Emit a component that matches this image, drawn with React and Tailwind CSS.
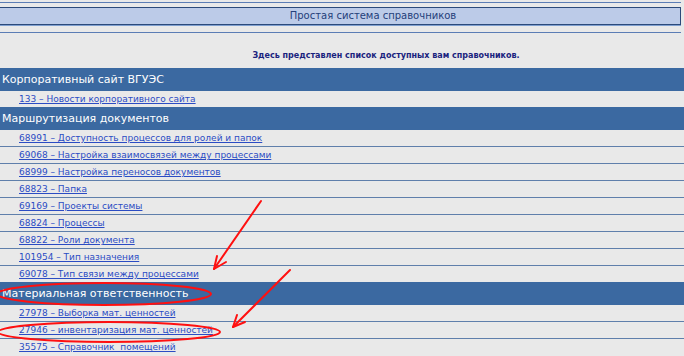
import React from "react";

const sections = [
  {
    title: "Корпоративный сайт ВГУЭС",
    items: ["133 – Новости корпоративного сайта"],
  },
  {
    title: "Маршрутизация документов",
    items: [
      "68991 – Доступность процессов для ролей и папок",
      "69068 – Настройка взаимосвязей между процессами",
      "68999 – Настройка переносов документов",
      "68823 – Папка",
      "69169 – Проекты системы",
      "68824 – Процессы",
      "68822 – Роли документа",
      "101954 – Тип назначения",
      "69078 – Тип связи между процессами",
    ],
  },
  {
    title: "Материальная ответственность",
    items: [
      "27978 – Выборка мат. ценностей",
      "27946 – инвентаризация мат. ценностей",
      "35575 – Справочник  помещений",
    ],
  },
];

function Annotations() {
  // red marker drawn over the screenshot
  return (
    <svg
      className="absolute left-0 top-0 pointer-events-none"
      width="684"
      height="356"
      viewBox="0 0 684 356"
      fill="none"
      stroke="#ff1010"
      strokeWidth="2"
      strokeLinecap="round"
    >
      <path d="M261 201 L214 269" />
      <path d="M214 269 L217 256 M214 269 L226 262" />
      <path d="M290 270 L233 327" />
      <path d="M233 327 L237 315 M233 327 L245 322" />
      <ellipse cx="104" cy="294" rx="107" ry="11" />
      <ellipse cx="109" cy="332" rx="111" ry="10" />
    </svg>
  );
}

export default function App() {
  return (
    <div className="relative w-[684px] h-[356px] overflow-hidden bg-[#e9e9e9] font-['DejaVu_Sans',sans-serif]">
      {/* Top title bar */}
      <div className="w-[681px]">
        <div className="h-[2px]" />
        <div className="h-px bg-[#5b7db5]" />
        <div className="h-[4px]" />
        <div className="h-px bg-[#2c4a7a]" />
        <div className="h-4 bg-[#bccbe8] border-r border-[#2c4a7a] flex items-center justify-center pl-[66px]">
          <span className="text-[10px] leading-none text-[#24407a]">Простая система справочников</span>
        </div>
        <div className="h-px bg-[#2c4a7a]" />
        <div className="h-px bg-[#7f9fcf]" />
        <div className="h-[6px]" />
        <div className="h-px bg-[#5b7db5]" />
      </div>

      {/* Intro text */}
      <div className="h-[35px] flex items-center justify-center pl-[88px] pt-[10px]">
        <span className="text-[8px] font-bold text-[#1a237e]">
          Здесь представлен список доступных вам справочников.
        </span>
      </div>

      {/* Sections */}
      {sections.map((s) => (
        <div key={s.title}>
          <div className="h-[23px] bg-[#3b69a1] flex items-center pl-[2px] pt-[2px]">
            <span className="text-[11px] text-white">{s.title}</span>
          </div>
          {s.items.map((it, i) => (
            <div
              key={it}
              className={
                i < s.items.length - 1
                  ? "h-[17px] flex items-center pl-[19px] pt-[2px] border-b border-[#5f7fab]"
                  : "h-[16px] flex items-center pl-[19px] pt-[2px]"
              }
            >
              <a href="#" className="text-[9px] text-[#2b4cc4] underline whitespace-pre">
                {it}
              </a>
            </div>
          ))}
        </div>
      ))}

      <Annotations />
    </div>
  );
}
